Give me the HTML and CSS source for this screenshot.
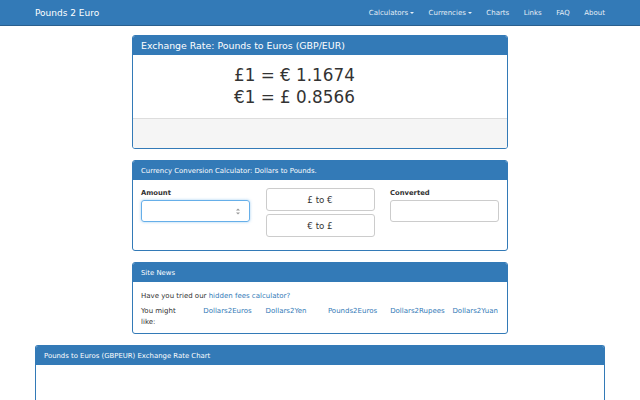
FILE: index.html
```html
<!DOCTYPE html>
<html>
<head>
<meta charset="utf-8">
<link rel="stylesheet" href="styles.css">
</head>
<body>
<nav class="navbar">
  <a class="brand">Pounds 2 Euro</a>
  <ul class="nav">
    <li>Calculators<span class="caret"></span></li>
    <li>Currencies<span class="caret"></span></li>
    <li>Charts</li>
    <li>Links</li>
    <li>FAQ</li>
    <li>About</li>
  </ul>
</nav>
<main class="page">
  <section class="panel narrow">
    <div class="panel-heading h1">Exchange Rate: Pounds to Euros (GBP/EUR)</div>
    <div class="panel-body rates">
      <div>£1 = € 1.1674</div>
      <div>€1 = £ 0.8566</div>
    </div>
    <div class="panel-footer"></div>
  </section>

  <section class="panel narrow">
    <div class="panel-heading h2">Currency Conversion Calculator: Dollars to Pounds.</div>
    <div class="panel-body calc">
      <div class="col">
        <label>Amount</label>
        <div class="input focus">
          <svg class="spin" width="4" height="7" viewBox="0 0 4 7"><path d="M0 2.5 L2 0.5 L4 2.5 Z M0 4.5 L2 6.5 L4 4.5 Z" fill="#999"/></svg>
        </div>
      </div>
      <div class="col buttons">
        <div class="btn">£ to €</div>
        <div class="btn">€ to £</div>
      </div>
      <div class="col">
        <label>Converted</label>
        <div class="input"></div>
      </div>
    </div>
  </section>

  <section class="panel narrow">
    <div class="panel-heading h2">Site News</div>
    <div class="panel-body news">
      <p>Have you tried our <a>hidden fees calculator?</a></p>
      <div class="links">
        <span>You might like:</span>
        <a>Dollars2Euros</a>
        <a>Dollars2Yen</a>
        <a>Pounds2Euros</a>
        <a>Dollars2Rupees</a>
        <a>Dollars2Yuan</a>
      </div>
    </div>
  </section>

  <section class="panel wide">
    <div class="panel-heading h2">Pounds to Euros (GBPEUR) Exchange Rate Chart</div>
    <div class="panel-body chart"></div>
  </section>
</main>
</body>
</html>
```
FILE: styles.css
```css
* { box-sizing: border-box; }
html, body { margin: 0; padding: 0; background: #fff; }
body { font-family: "DejaVu Sans", sans-serif; color: #333; font-size: 7px; }

.navbar {
  height: 26px;
  background: #337ab7;
  border-bottom: 1px solid #2a5f8e;
  display: flex;
  align-items: center;
  justify-content: space-between;
  padding: 0 35px;
}
.brand { color: #fff; font-size: 9px; }
.nav { list-style: none; margin: 0; padding: 0; display: flex; gap: 14.5px; }
.nav li { color: #e6eef6; font-size: 7px; display: flex; align-items: center; }
.caret {
  display: inline-block; width: 0; height: 0; margin-left: 2px;
  border-top: 2px solid #e6eef6; border-left: 2px solid transparent; border-right: 2px solid transparent;
}

.page { display: flex; flex-direction: column; align-items: center; padding-top: 9px; gap: 11px; }
.panel { border: 1px solid #337ab7; border-radius: 3px; overflow: hidden; background: #fff; }
.narrow { width: 376px; }
.wide { width: 570px; }
.panel-heading { background: #337ab7; color: #fff; height: 19px; display: flex; align-items: center; padding: 0 8px; }
.h1 { font-size: 9.4px; }
.h2 { font-size: 6.9px; }

.rates { font-size: 16.8px; line-height: 22px; text-align: left; padding: 9px 0 0 101px; height: 63px; color: #333; }
.panel-footer { background: #f5f5f5; border-top: 1px solid #ddd; height: 30px; }

.calc { display: flex; gap: 15.5px; padding: 7px 8px 0; height: 70px; }
.col { width: 109px; display: flex; flex-direction: column; }
.col label { font-weight: bold; font-size: 6.8px; margin: 2px 0 3px; line-height: 8px; }
.input { height: 22px; border: 1px solid #ccc; border-radius: 3px; position: relative; }
.input.focus { border-color: #66afe9; box-shadow: 0 0 3px rgba(102,175,233,.6); }
.spin { position: absolute; right: 9px; top: 7px; }
.buttons { gap: 3px; padding-top: 1px; }
.btn { height: 23px; border: 1px solid #ccc; border-radius: 3px; display: flex; align-items: center; justify-content: center; font-size: 8.7px; }

.news { padding: 9px 8px 0; font-size: 7px; height: 51px; }
.news p { margin: 0 0 4px; line-height: 11px; }
.news a { color: #337ab7; }
.links { display: grid; grid-template-columns: repeat(6, 62.3px); line-height: 11px; }
.links span { width: 46px; }

.chart { height: 40px; }
.wide.panel { border-bottom: none; }
```
